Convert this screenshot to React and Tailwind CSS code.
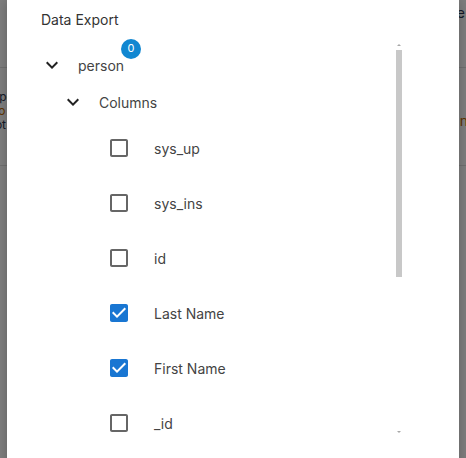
import React from 'react';

const ExpandIcon = ({ className }) => (
  <svg viewBox="0 0 24 24" className={className} fill="currentColor">
    <path d="M16.59 8.59 12 13.17 7.41 8.59 6 10l6 6 6-6z" />
  </svg>
);

const BoxIcon = ({ checked }) =>
  checked ? (
    <svg viewBox="0 0 24 24" className="w-6 h-6 text-[#1976d2]" fill="currentColor">
      <path d="M19 3H5c-1.11 0-2 .9-2 2v14c0 1.1.89 2 2 2h14c1.1 0 2-.9 2-2V5c0-1.1-.9-2-2-2zm-9 14l-5-5 1.41-1.41L10 14.17l7.59-7.59L19 8l-9 9z" />
    </svg>
  ) : (
    <svg viewBox="0 0 24 24" className="w-6 h-6 text-[#666]" fill="currentColor">
      <path d="M19 5v14H5V5h14m0-2H5c-1.11 0-2 .9-2 2v14c0 1.1.89 2 2 2h14c1.1 0 2-.9 2-2V5c0-1.1-.9-2-2-2z" />
    </svg>
  );

const columns = [
  { name: 'sys_up', checked: false },
  { name: 'sys_ins', checked: false },
  { name: 'id', checked: false },
  { name: 'Last Name', checked: true },
  { name: 'First Name', checked: true },
  { name: '_id', checked: false },
];

export default function App() {
  return (
    <div
      className="relative w-[466px] h-[458px] overflow-hidden bg-white"
      style={{ fontFamily: 'Inter, "Noto Sans", sans-serif' }}
    >
      {/* page behind the dialog */}
      <div className="absolute inset-0 text-[12px] text-[#2b3550]">
        <div className="h-[68px] border-b border-[#e0e0e0] flex justify-end items-start pt-[2px] pr-[1px] text-[14px]">
          <span>Title</span>
        </div>
        <div className="pt-[22px] leading-[14px] -ml-[8px]">
          <div>ope</div>
          <div className="text-[#c06a00]">ko</div>
          <div>lot</div>
        </div>
        <div className="absolute right-[-2px] top-[110px] text-[14px] text-[#c06a00]">n</div>
        <div className="absolute left-0 right-0 top-[165px] border-b border-[#e0e0e0]" />
      </div>
      <div className="absolute inset-0 bg-black/50" />

      {/* dialog */}
      <div className="absolute left-[7px] top-0 w-[452px] h-[480px] bg-white shadow-[0_0_12px_rgba(0,0,0,0.25)] flex flex-col">
        <div className="h-[38px] flex items-center pl-[34px] text-[14px] text-[#333]">Data Export</div>
        <div className="flex h-[400px]">
          <div className="w-[389px] overflow-hidden pt-[6px] text-[14px] text-[#444]">
            <div className="h-[42px] flex items-center pl-[33px]">
              <ExpandIcon className="w-6 h-6 text-[#222]" />
              <div className="relative ml-[14px]">
                <span>person</span>
                <span className="absolute left-[43px] top-[-16px] w-5 h-5 rounded-full bg-[#1187d1] text-white text-[11px] flex items-center justify-center">
                  0
                </span>
              </div>
            </div>
            <div className="h-[34px] flex items-center pl-[54px] pb-[2px]">
              <ExpandIcon className="w-6 h-6 text-[#222]" />
              <span className="ml-[14px]">Columns</span>
            </div>
            {columns.map((c) => (
              <div key={c.name} className="h-[55px] flex items-center pl-[100px] pt-[1px]">
                <BoxIcon checked={c.checked} />
                <span className="ml-[23px]">{c.name}</span>
              </div>
            ))}
          </div>
          {/* scrollbar */}
          <div className="w-[6px] flex flex-col items-center pt-[5px]">
            <svg viewBox="0 0 6 4" className="w-[6px] h-[4px]">
              <path d="M3 1 5 3H1z" fill="#a8a8a8" />
            </svg>
            <div className="w-[6px] h-[227px] mt-[3px] bg-[#c8c8c8]" />
            <div className="flex-1" />
            <svg viewBox="0 0 6 4" className="w-[6px] h-[4px] mb-[4px]">
              <path d="M1 1h4L3 3z" fill="#a8a8a8" />
            </svg>
          </div>
        </div>
      </div>
    </div>
  );
}
